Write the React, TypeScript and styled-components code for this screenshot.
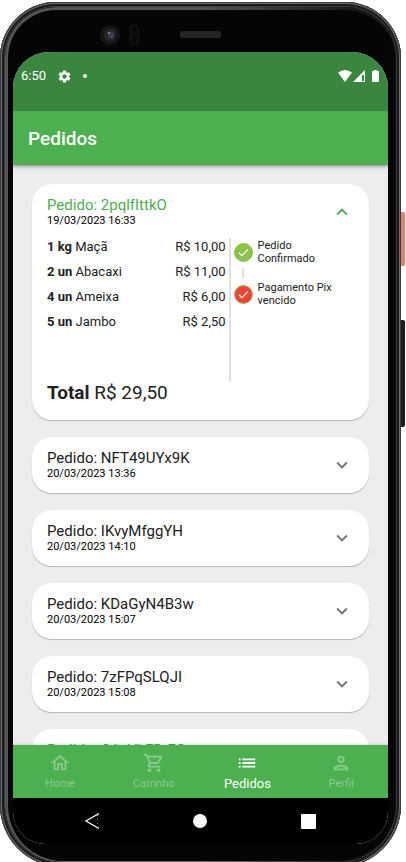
import React, { useState } from "react";
import styled, { createGlobalStyle } from "styled-components";
import {
  MdExpandLess,
  MdExpandMore,
  MdList,
  MdOutlineHome,
  MdOutlinePerson,
  MdOutlineShoppingCart,
  MdSettings,
} from "react-icons/md";

const GREEN = "#4caf50";
const GREEN_DARK = "#3b863e";

const GlobalStyle = createGlobalStyle`
  * { box-sizing: border-box; }
  body {
    margin: 0;
    background: #fff;
    font-family: Roboto, "Liberation Sans", sans-serif;
    color: #212121;
  }
  button { font: inherit; color: inherit; border: 0; background: none; padding: 0; cursor: pointer; }
`;

const Stage = styled.div`
  height: 100vh;
  overflow: hidden;
  padding: 2px 5px 0 0;
`;

const Phone = styled.div`
  position: relative;
  display: flex;
  flex-direction: column;
  height: calc(100vh + 3px);
  padding: 50px 13px 23px;
  border-radius: 56px 56px 62px 62px;
  background: linear-gradient(90deg, #0a0808, #050506 12px, #050506 calc(100% - 12px), #0a0a0b);
  box-shadow:
    inset 0 0 0 1px #3c3d40,
    inset 0 0 0 2px #6c6d71,
    inset 0 0 0 4px #1b1b1d,
    inset 0 0 0 5px #3a3b3d;
`;

const EdgeShine = styled.div`
  position: absolute;
  inset: 5px 5px 5px 5px;
  border-radius: 51px 51px 57px 57px;
  pointer-events: none;
  border: 1px solid #1c1d1f;
  border-left: 3px solid #55555a;
  border-top: 3px solid #55565a;
  border-bottom-color: #6a6a6a;
  mask-image: linear-gradient(90deg, #000 0%, #000 50%, rgba(0, 0, 0, 0.25) 90%);
`;

const SideKey = styled.span<{ $tone: string; $top: number; $height: number }>`
  position: absolute;
  left: 100%;
  top: ${(p) => p.$top}px;
  width: 4px;
  height: ${(p) => p.$height}px;
  border-radius: 0 2px 2px 0;
  background: ${(p) => p.$tone};
`;

const Hardware = styled.svg`
  position: absolute;
  left: 98px;
  top: 20px;
`;

const Screen = styled.main`
  flex: 1;
  min-height: 0;
  display: flex;
  flex-direction: column;
  overflow: hidden;
  border-radius: 36px 36px 32px 32px;
  background: #ededed;
`;

const StatusBar = styled.div`
  flex: none;
  position: relative;
  z-index: 2;
  display: flex;
  align-items: center;
  height: 59px;
  padding: 0 8px 11px;
  background: ${GREEN_DARK};
  color: #fff;
`;

const Clock = styled.time`
  font-size: 13px;
  line-height: 16px;
`;

const StatusIcons = styled.div<{ $end?: boolean }>`
  display: flex;
  align-items: center;
  gap: 11px;
  margin-left: ${(p) => (p.$end ? "auto" : "11px")};
`;

const Dot = styled.span`
  width: 4px;
  height: 4px;
  border-radius: 50%;
  background: #fff;
`;

const AppBar = styled.header`
  flex: none;
  position: relative;
  z-index: 1;
  display: flex;
  align-items: center;
  height: 54px;
  padding: 2px 15px 0;
  background: ${GREEN};
  box-shadow: 0 1px 4px rgba(0, 0, 0, 0.5);
`;

const Title = styled.h1`
  margin: 0;
  color: #fff;
  font-size: 19px;
  font-weight: 500;
  line-height: 24px;
`;

const OrderList = styled.div`
  flex: 1;
  min-height: 0;
  overflow: hidden;
  display: flex;
  flex-direction: column;
  gap: 17px;
  padding: 19px 19px 0;
`;

const Card = styled.article`
  flex: none;
  padding-bottom: 2px;
  border-radius: 20px;
  background: #fff;
  box-shadow: 0 1px 1px rgba(0, 0, 0, 0.24);
`;

const CardHeader = styled.button`
  display: flex;
  align-items: center;
  justify-content: space-between;
  width: 100%;
  padding: 12px 16px 10px 15px;
  text-align: left;
`;

const CardHeading = styled.span<{ $green?: boolean }>`
  display: block;
  font-size: 15px;
  line-height: 18px;
  color: ${(p) => (p.$green ? GREEN : "#212121")};
`;

const CardDate = styled.time`
  display: block;
  font-size: 11px;
  line-height: 14px;
  color: #000;
`;

const Chevron = styled.span<{ $open: boolean }>`
  display: flex;
  color: ${(p) => (p.$open ? GREEN : "#757575")};
`;

const CardBody = styled.div`
  padding: 0 16px 14px 15px;
`;

const Details = styled.div`
  display: grid;
  grid-template-columns: 3fr 2fr;
  height: 144px;
`;

const Items = styled.ul`
  display: flex;
  flex-direction: column;
  gap: 8px;
  margin: 0;
  padding: 0 3px 0 0;
  border-right: 2px solid #e0e0e0;
  list-style: none;
`;

const Item = styled.li`
  display: flex;
  justify-content: space-between;
  font-size: 13px;
  line-height: 17px;
`;

const Steps = styled.div`
  display: flex;
  flex-direction: column;
  gap: 3px;
  padding: 1px 12px 0 3px;
`;

const Step = styled.div`
  display: flex;
  align-items: center;
  gap: 5px;
  font-size: 11px;
  line-height: 13px;
`;

const StepMark = styled.span<{ $late?: boolean }>`
  flex: none;
  display: flex;
  align-items: center;
  justify-content: center;
  width: 19px;
  height: 19px;
  border: 1px solid #8bc34a;
  border-radius: 50%;
  background: ${(p) => (p.$late ? "#f44336" : "#8bc34a")};
`;

const StepLink = styled.span`
  width: 2px;
  height: 10px;
  margin-left: 8px;
  background: #e0e0e0;
`;

const Total = styled.p`
  margin: 0;
  font-size: 19px;
  line-height: 22px;
`;

const BottomNav = styled.nav`
  flex: none;
  display: grid;
  grid-template-columns: repeat(4, 1fr);
  height: 53px;
  background: ${GREEN};
  position: relative;
  box-shadow: 0 -1px 2px rgba(0, 0, 0, 0.12);
`;

const Tab = styled.button<{ $active?: boolean }>`
  display: flex;
  flex-direction: column;
  align-items: center;
  padding-top: 7px;
  color: ${(p) => (p.$active ? "#fff" : "#8acb8d")};
  font-size: ${(p) => (p.$active ? 13 : 11)}px;
  line-height: 20px;
`;

const SystemNav = styled.div`
  flex: none;
  display: grid;
  grid-template-columns: repeat(3, 1fr);
  height: 46px;
  padding: 0 25px;
  background: #000;
`;

const SystemKey = styled.button`
  display: flex;
  align-items: center;
  justify-content: center;
`;

type Order = {
  code: string;
  date: string;
  green?: boolean;
  items: [string, string, string][];
  total: string;
};

const orders: Order[] = [
  {
    code: "2pqlfIttkO",
    date: "19/03/2023 16:33",
    items: [
      ["1 kg", "Maçã", "R$ 10,00"],
      ["2 un", "Abacaxi", "R$ 11,00"],
      ["4 un", "Ameixa", "R$ 6,00"],
      ["5 un", "Jambo", "R$ 2,50"],
    ],
    total: "R$ 29,50",
  },
  { code: "NFT49UYx9K", date: "20/03/2023 13:36", items: [], total: "" },
  { code: "IKvyMfggYH", date: "20/03/2023 14:10", items: [], total: "" },
  { code: "KDaGyN4B3w", date: "20/03/2023 15:07", items: [], total: "" },
  { code: "7zFPqSLQJI", date: "20/03/2023 15:08", items: [], total: "" },
  { code: "O1cVLFRtFO", date: "20/03/2023 15:10", green: true, items: [], total: "" },
];

const Tick = () => (
  <svg width="13" height="13" viewBox="0 0 13 13" fill="none" stroke="#fff" strokeWidth="1.2">
    <path d="M2 6.8 4.9 9.6 11 3.4" />
  </svg>
);

function OrderCard({ order, open, onToggle }: { order: Order; open: boolean; onToggle: () => void }) {
  return (
    <Card>
      <CardHeader aria-expanded={open} onClick={onToggle}>
        <span>
          <CardHeading $green={open || order.green}>Pedido: {order.code}</CardHeading>
          <CardDate>{order.date}</CardDate>
        </span>
        <Chevron $open={open}>{open ? <MdExpandLess size={22} /> : <MdExpandMore size={22} />}</Chevron>
      </CardHeader>
      {open && order.items.length > 0 && (
        <CardBody>
          <Details>
            <Items>
              {order.items.map(([qty, name, price]) => (
                <Item key={name}>
                  <span>
                    <b>{qty}</b> {name}
                  </span>
                  <span>{price}</span>
                </Item>
              ))}
            </Items>
            <Steps>
              <Step>
                <StepMark><Tick /></StepMark>
                <span>Pedido Confirmado</span>
              </Step>
              <StepLink />
              <Step>
                <StepMark $late><Tick /></StepMark>
                <span>Pagamento Pix vencido</span>
              </Step>
            </Steps>
          </Details>
          <Total>
            <b>Total</b> {order.total}
          </Total>
        </CardBody>
      )}
    </Card>
  );
}

export default function App() {
  const [openCode, setOpenCode] = useState<string | null>(orders[0].code);
  return (
    <>
      <GlobalStyle />
      <Stage>
        <Phone>
          <EdgeShine />
          <SideKey $tone="#e8806a" $top={210} $height={54} />
          <SideKey $tone="#1d1e20" $top={318} $height={107} />
          <Hardware width="126" height="28" viewBox="0 0 126 28" aria-hidden="true">
            <circle cx="12" cy="13" r="10" fill="#161617" />
            <circle cx="12" cy="13" r="6" fill="#26272a" />
            <circle cx="13" cy="13" r="3" fill="#3a3d52" />
            <circle cx="11" cy="11" r="1" fill="#8b8fa0" />
            <circle cx="14" cy="15" r="1" fill="#4a508c" />
            <rect x="32" y="3" width="9" height="20" rx="4" fill="#0c0c0d" stroke="#141416" />
            <circle cx="36.5" cy="7.500" r="3" fill="#050506" stroke="#121214" />
            <circle cx="36.5" cy="18.500" r="3" fill="#050506" stroke="#121214" />
            <rect x="82" y="9" width="41" height="7" rx="2" fill="#242425" />
          </Hardware>
          <Screen>
            <StatusBar>
              <Clock>6:50</Clock>
              <StatusIcons>
                <MdSettings size={15} />
                <Dot />
              </StatusIcons>
              <StatusIcons $end>
                <svg width="42" height="14" viewBox="0 0 42 14" fill="#fff">
                  <path d="M0 3.500Q7 -1.500 14 3.500L7 13Z" />
                  <path d="M27 1V13H15Z" />
                  <path d="M24 6H26V12H24Z" fill={GREEN_DARK} />
                  <path d="M36 1H39V2H41V13H34V2H36Z" />
                </svg>
              </StatusIcons>
            </StatusBar>
            <AppBar>
              <Title>Pedidos</Title>
            </AppBar>
            <OrderList>
              {orders.map((order) => (
                <OrderCard
                  key={order.code}
                  order={order}
                  open={openCode === order.code}
                  onToggle={() => setOpenCode(openCode === order.code ? null : order.code)}
                />
              ))}
            </OrderList>
            <BottomNav>
              <Tab><MdOutlineHome size={22} />Home</Tab>
              <Tab><MdOutlineShoppingCart size={22} />Carrinho</Tab>
              <Tab $active aria-current="page"><MdList size={22} />Pedidos</Tab>
              <Tab><MdOutlinePerson size={22} />Perfil</Tab>
            </BottomNav>
            <SystemNav>
              <SystemKey aria-label="Voltar">
                <svg width="16" height="18" viewBox="0 0 16 18" fill="none" stroke="#fff">
                  <path d="M15 1.500 2 9 15 16.500" strokeWidth="1.300" />
                  <path d="M13.500 3V16" strokeDasharray="1 3" opacity="0.5" />
                </svg>
              </SystemKey>
              <SystemKey aria-label="Início">
                <svg width="14" height="14" viewBox="0 0 14 14"><circle cx="7" cy="7" r="7" fill="#fff" /></svg>
              </SystemKey>
              <SystemKey aria-label="Recentes">
                <svg width="15" height="15" viewBox="0 0 15 15"><rect width="15" height="15" rx="1" fill="#fff" /></svg>
              </SystemKey>
            </SystemNav>
          </Screen>
        </Phone>
      </Stage>
    </>
  );
}
